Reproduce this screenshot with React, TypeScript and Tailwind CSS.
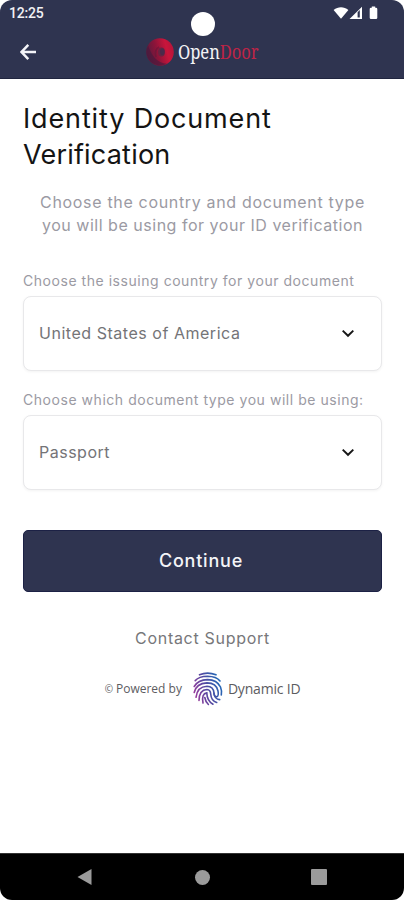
import React, { useState } from 'react';

interface SelectFieldProps {
  label: string;
  labelClass: string;
  value: string;
  valueClass: string;
  onOpen: () => void;
}

// Label with a boxed dropdown below it
function SelectField({ label, labelClass, value, valueClass, onOpen }: SelectFieldProps) {
  return (
    <div className="flex flex-col">
      <span className={`h-5 text-[14px] leading-5 whitespace-nowrap text-[#9b9aa3] ${labelClass}`}>{label}</span>
      <button
        type="button"
        onClick={onOpen}
        className="mt-[5px] flex h-[75px] w-full items-center justify-between rounded-lg border border-[#e8e8ea] bg-white pr-[25px] pb-[2px] pl-[15px] shadow-[0_1px_3px_rgba(0,0,0,0.05)]"
      >
        <span className={`text-[16px] whitespace-nowrap text-[#747477] ${valueClass}`}>{value}</span>
        <svg className="h-4 w-4" viewBox="0 0 16 16" fill="none" stroke="#161616" strokeWidth="1.9">
          <path d="M2.7 5.6 8 10.8l5.3-5.2" />
        </svg>
      </button>
    </div>
  );
}

// Time, camera cutout and system icons
function StatusBar() {
  return (
    <div className="relative flex h-[26px] items-center justify-between pr-[25px] pl-[9px]">
      <span className="font-[Roboto] text-[14px] font-medium tracking-[-0.2px] text-[#f1f1f5]">12:25</span>
      <span className="absolute top-[12px] left-[191px] h-6 w-6 rounded-full bg-white"></span>
      <svg className="h-[14px] w-[46px]" viewBox="0 0 46 14" fill="#fff">
        <path d="M.6 3.9C5.1.3 10.9.3 15.4 3.9L8 12.8z" />
        <path fillRule="evenodd" d="M16.5 13 29 .8V13zM24.6 6.2V11.5H26.8V4z" />
        <path d="M38.8.5h3.4v1.300h.8q1.300 0 1.300 1.300v8.700q0 1.300-1.300 1.300h-5q-1.300 0-1.300-1.300V3.100q0-1.300 1.300-1.300h.8z" />
      </svg>
    </div>
  );
}

function OpenDoorLogo() {
  return (
    <div className="flex items-center pl-[2px]">
      <svg className="h-7 w-7" viewBox="0 0 28 28">
        <defs>
          <linearGradient id="ring" x1="0" y1="0.6" x2="1" y2="0.35">
            <stop offset="0" stopColor="#561b3e" />
            <stop offset="0.4" stopColor="#8e1439" />
            <stop offset="0.75" stopColor="#c9153b" />
            <stop offset="1" stopColor="#b5153a" />
          </linearGradient>
        </defs>
        <circle cx="14" cy="14" r="13.8" fill="url(#ring)" />
        <path d="M2 7.5A13.8 13.8 0 0 0 21 25.8C12 25 6 19 2 7.5z" fill="#421a3d" opacity="0.6" />
        <path d="M13 9q-5 3-3 10" fill="none" stroke="#5b1739" strokeWidth="1.5" opacity="0.5" />
        <ellipse cx="15.5" cy="14" rx="3.4" ry="4.6" fill="#672442" />
        <ellipse cx="16.3" cy="13.7" rx="2.2" ry="3.2" fill="#4a2b4b" />
      </svg>
      <div className="ml-[4px] w-[82px]">
        <span className="inline-block origin-left scale-x-[0.83] font-['Noto_Serif','Liberation_Serif',serif] text-[20px] leading-7 tracking-[-0.1px] text-[#f2f2f5]">
          Open<span className="text-[#bd2447]">Door</span>
        </span>
      </div>
    </div>
  );
}

function Fingerprint() {
  return (
    <svg className="ml-[11px] h-[34px] w-[30px]" viewBox="0 0 30 34" fill="none" stroke="url(#print)" strokeWidth="1.6" strokeLinecap="round">
      <defs>
        <linearGradient id="print" gradientUnits="userSpaceOnUse" x1="2" y1="24" x2="28" y2="14">
          <stop offset="0" stopColor="#9a3c9c" />
          <stop offset="0.45" stopColor="#5747a0" />
          <stop offset="1" stopColor="#2467b5" />
        </linearGradient>
      </defs>
      <path d="M6.5 2.8Q14.500-.5 23 2.8" />
      <path d="M2.2 8.6Q6 4.5 14.5 4.3 23.5 4.5 27 9" />
      <path d="M1.2 14.5Q5 7.8 14.5 7.6 24 7.8 27.5 15q1.5 3.5.8 8" />
      <path d="M1.2 20.5Q3.3 11.3 14 10.9q9.3 0 11 8.1.8 4.500-.8 5.600-3 .9-3.400-3.600" />
      <path d="M3 25.300Q4.200 14.600 14 14.200q6.500.2 7 6.800.6 6.300 5.700 6.600" />
      <path d="M6 28.500Q6.200 17.800 14 17.500q3.500.2 3.700 4.500.5 6.800 6 8.500" />
      <path d="M10 31Q8.300 21.500 13.800 20.900q.2 7.800 6.200 11.300" />
      <path d="M11.800 25.500q.7 4.300 3.600 7" />
    </svg>
  );
}

export default function App() {
  const [, setOpenField] = useState<string | null>(null);

  return (
    <div className="h-[900px] w-[404px] overflow-hidden bg-white">
      <div className="flex h-full flex-col overflow-hidden rounded-[12px] bg-white font-[Inter,sans-serif]">
        <header className="h-[79px] border-b border-[#20253f] bg-[#2f3450]">
          <StatusBar />
          <div className="grid h-[52px] grid-cols-[1fr_auto_1fr] items-center">
            <button type="button" className="ml-[19px] w-[18px]" aria-label="Back">
              <svg className="h-[18px] w-[18px]" viewBox="0 0 18 18" fill="none" stroke="#f4f4f8" strokeWidth="2.5">
                <path d="M17 9H3M9.3 1.8 2.5 9l6.8 7.2" />
              </svg>
            </button>
            <OpenDoorLogo />
          </div>
        </header>

        <main className="flex flex-1 flex-col pr-[22px] pl-[23px]">
          <h1 className="mt-[22px] text-[27px] leading-9 tracking-[0.85px] text-[#141414]">
            Identity Document
            <br />
            <span className="tracking-[0.2px]">Verification</span>
          </h1>
          <p className="mt-[18px] text-center text-[16px] leading-[23px] tracking-[0.52px] whitespace-nowrap text-[#9b9aa3]">
            <span className="tracking-[0.67px]">Choose the country and document type</span>
            <br />
            you will be using for your ID verification
          </p>

          <div className="mt-[34px] flex flex-col gap-[19px]">
            <SelectField
              label="Choose the issuing country for your document"
              labelClass="tracking-[0.54px]"
              value="United States of America"
              valueClass="tracking-[0.53px]"
              onOpen={() => setOpenField('country')}
            />
            <SelectField
              label="Choose which document type you will be using:"
              labelClass="tracking-[0.54px]"
              value="Passport"
              valueClass="tracking-[0.5px]"
              onOpen={() => setOpenField('document')}
            />
          </div>

          <button type="button" className="mt-[40px] h-[62px] w-full rounded-[5px] border border-[#1c2145] bg-[#2f3450] pr-[3px] pb-[1px] text-[18px] font-medium tracking-[0.8px] text-[#f4f4f8]">
            Continue
          </button>

          <a className="mt-[34px] text-center text-[16px] leading-6 tracking-[0.7px] text-[#77777a]">Contact Support</a>

          {/* Footer branding */}
          <div className="mt-[21px] flex h-[36px] items-center justify-center font-['Open_Sans',sans-serif] whitespace-nowrap text-[#5c5c5f]">
            <span className="text-[10px]">©</span>
            <span className="ml-[3px] text-[12px]">Powered by</span>
            <Fingerprint />
            <span className="ml-[5px] pb-[1px] text-[14px] tracking-[-0.2px]">Dynamic ID</span>
          </div>
        </main>

        <nav className="grid h-[47px] grid-cols-[1fr_16px_1fr] items-center border-t border-[#333] bg-black">
          <svg className="ml-[77px] h-4 w-[15px]" viewBox="0 0 15 16" fill="#9b9b9b">
            <path d="M14.5 0v16L.5 8z" />
          </svg>
          <span className="ml-px h-[15px] w-[15px] rounded-full bg-[#9b9b9b]"></span>
          <span className="ml-[101px] h-4 w-4 rounded-[1px] bg-[#9b9b9b]"></span>
        </nav>
      </div>
    </div>
  );
}
